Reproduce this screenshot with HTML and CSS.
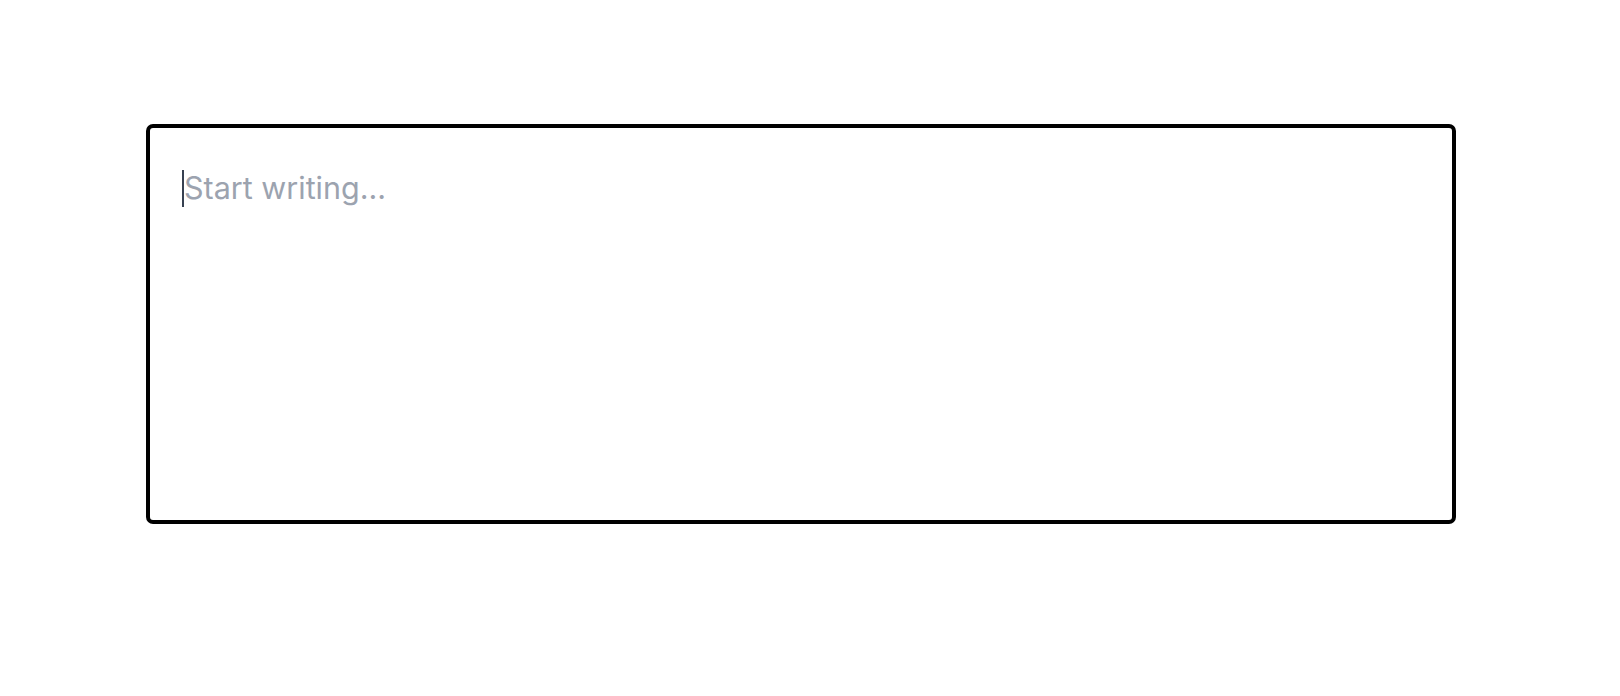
FILE: index.html
```html
<!DOCTYPE html>
<html>
<head>
<meta charset="utf-8">
<link rel="stylesheet" href="styles.css">
</head>
<body>
<div class="page">
  <div class="editor">
    <div class="line"><span class="caret"></span><span class="placeholder">Start writing...</span></div>
  </div>
</div>
</body>
</html>
```
FILE: styles.css
```css
html, body {
  margin: 0;
  padding: 0;
  background: #ffffff;
}
.page {
  padding-top: 124px;
  padding-left: 146px;
}
.editor {
  box-sizing: border-box;
  width: 1310px;
  height: 400px;
  border: 4px solid #000000;
  border-radius: 7px;
  padding: 41px 32px;
  font-family: Inter, "Noto Sans", sans-serif;
  font-size: 30.5px;
  line-height: 38px;
}
.line {
  display: flex;
  align-items: center;
}
.caret {
  display: inline-block;
  width: 2px;
  height: 37px;
  background: #374151;
}
.placeholder {
  color: #9ca3af;
}
```
